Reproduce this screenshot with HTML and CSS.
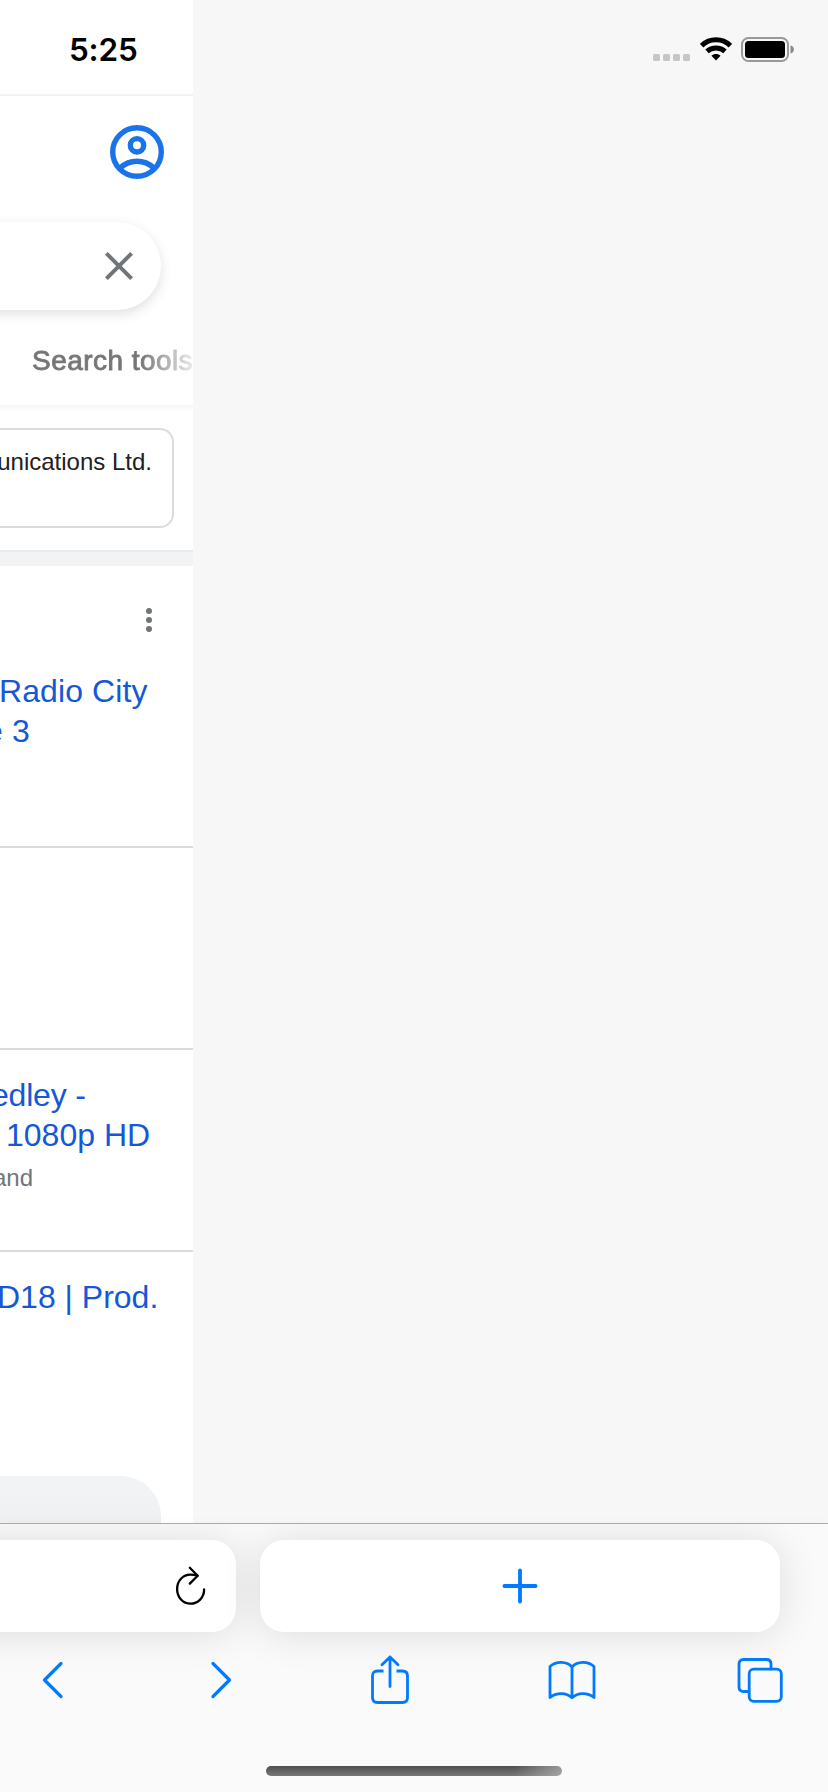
FILE: index.html
```html
<!DOCTYPE html>
<html lang="en">
<head>
<meta charset="utf-8">
<title>Browser</title>
<link rel="stylesheet" href="styles.css">
</head>
<body>
<div class="screen">
  <div class="viewport">
    <main class="page">
      <div class="status-left"><span class="time">5:25</span></div>
      <header class="header">
        <svg class="avatar" width="54" height="54" viewBox="0 0 54 54" fill="none" stroke="#1a73e8" stroke-width="5.4">
          <circle cx="27" cy="27" r="24.3"/>
          <circle cx="27" cy="20.3" r="6.7"/>
          <path d="M10 43C20 34 34 34 44 43"/>
        </svg>
      </header>
      <div class="search">
        <svg width="28" height="28" viewBox="0 0 28 28" stroke="#70757a" stroke-width="4"><path d="M1.4 1.4L26.6 26.6M26.6 1.4L1.4 26.6"/></svg>
      </div>
      <nav class="tabs"><span class="tab">Search tools</span></nav>
      <div class="card-row"><div class="card"><span>unications Ltd.</span></div></div>
      <div class="band"></div>
      <section class="result first">
        <svg class="dots" width="6" height="24" viewBox="0 0 6 24" fill="#70757a"><circle cx="3" cy="3" r="3"/><circle cx="3" cy="12" r="3"/><circle cx="3" cy="21" r="3"/></svg>
        <h3 class="title r1"><span>Radio City</span><span class="r2">e 3</span></h3>
      </section>
      <section class="result"></section>
      <section class="result">
        <h3 class="title"><span class="e1">edley -</span><span class="e2">1080p HD</span></h3>
        <p class="sub">and</p>
      </section>
      <section class="result last">
        <h3 class="title"><span class="d1">D18 | Prod.</span></h3>
        <div class="more"></div>
      </section>
    </main>
    <div class="status-right">
      <i class="cell"></i><i class="cell"></i><i class="cell"></i><i class="cell"></i>
      <svg class="wifi" width="32" height="24" viewBox="0 0 32 24" fill="none" stroke="#000" stroke-width="5">
        <path d="M1.600 8.600C9.600.8 22.400.8 30.400 8.600"/>
        <path d="M7 14.300C12 9.800 20 9.800 25 14.300"/>
        <path d="M11.400 18.800C14 16.500 18 16.500 20.600 18.800L16 23.600Z" fill="#000" stroke="none"/>
      </svg>
      <svg class="battery" width="53" height="26" viewBox="0 0 53 26">
        <rect x="1" y="1" width="46" height="23" rx="6.500" fill="none" stroke="#999" stroke-width="2"/>
        <rect x="4" y="4" width="40" height="17" rx="3.500"/>
        <path d="M49.500 8.500C54 9.500 54 15.500 49.500 16.500Z" fill="#888"/>
      </svg>
    </div>
  </div>
  <footer class="bar">
    <div class="cards">
      <div class="address">
        <svg width="32" height="40" viewBox="0 0 32 40" fill="none" stroke="#000" stroke-width="2.300" stroke-linecap="round" stroke-linejoin="round">
          <path d="M29.100 23.400C29.100 31.500 23 37.700 15.500 37.700S2.100 31.500 2.100 23.100S8 8.700 15.500 8.700C18.200 8.700 20.200 9.100 22.500 9.700"/>
          <path d="M14.800 1.800L22.700 9.700L14.800 17.600"/>
        </svg>
      </div>
      <div class="newtab">
        <svg width="36" height="36" viewBox="0 0 36 36" stroke="#007aff" stroke-width="3.800" stroke-linecap="round"><path d="M18 2.400V33.600M2.400 18H33.600"/></svg>
      </div>
    </div>
    <div class="tools">
      <svg width="22" height="38" viewBox="0 0 22 38"><path d="M19 2.500L2.500 19L19 35.500"/></svg>
      <svg class="next" width="22" height="38" viewBox="0 0 22 38"><path d="M3 2.500L19.500 19L3 35.500"/></svg>
      <svg width="38" height="50" viewBox="0 0 38 50" class="thin share">
        <path d="M12.500 16H6.500Q1.500 16 1.500 21V42.500Q1.500 47.500 6.500 47.500H31.500Q36.500 47.500 36.500 42.500V21Q36.500 16 31.500 16H25.500" stroke-linecap="butt"/>
        <path d="M19 31.500V2M11 9.800L19 2L27 9.800"/>
      </svg>
      <svg width="48" height="40" viewBox="0 0 48 40" class="thin book">
        <path d="M24 7C18.500 1.200 8.500.9 2 6.500V37.500C8.500 32.200 18.500 32.300 24 37.800C29.500 32.300 39.500 32.200 46 37.500V6.500C39.500.9 29.500 1.200 24 7V37.800"/>
      </svg>
      <svg width="46" height="46" viewBox="0 0 46 46" class="thin">
        <rect x="12.200" y="12.200" width="32.100" height="32.100" rx="4.500"/>
        <path d="M12 34.500H6.500Q2 34.500 2 30V7Q2 2.500 6.500 2.500H29.500Q34 2.500 34 7V12"/>
      </svg>
    </div>
    <div class="home"></div>
  </footer>
</div>
</body>
</html>
```

FILE: styles.css
```css
* { box-sizing: border-box; }
body { margin: 0; font-family: "Liberation Sans", Arial, sans-serif; }
.screen { width: 828px; height: 1792px; display: flex; flex-direction: column; overflow: hidden; background: #f7f7f7; }
.viewport { height: 1523px; display: flex; justify-content: space-between; }
.page { width: 193px; height: 1523px; background: #fff; overflow: hidden; white-space: nowrap; }
.status-left { height: 96px; border-bottom: 2px solid #f2f2f2; padding: 30px 0 0 69px; }
.time { display: block; font: 600 31.5px/40px Inter, sans-serif; letter-spacing: -.2px; color: #000; }
.header { height: 126px; padding: 29px 0 0 110px; }
.avatar { display: block; }
.search { width: 221px; height: 88px; margin-left: -60px; border-radius: 44px; background: #fff; box-shadow: 0 4px 12px rgba(60,64,67,.16); padding: 30px 0 0 165px; }
.search svg { display: block; }
.tabs { height: 97px; padding: 35px 0 0 32px; border-bottom: 2px solid #f7f7f7; }
.tab { display: block; font-size: 28px; line-height: 32px; color: transparent; letter-spacing: .45px; background: linear-gradient(90deg, #757575 0, #757575 108px, #e4e4e4 158px); -webkit-background-clip: text; background-clip: text; -webkit-text-stroke: .9px transparent; }
.card-row { height: 143px; padding-top: 21px; background: linear-gradient(#fafafa, #fff 5px); }
.card { width: 174px; height: 100px; border: 2px solid #dadce0; border-left: 0; border-radius: 0 14px 14px 0; padding: 16px 20px 0 0; display: flex; justify-content: flex-end; font-size: 24px; line-height: 32px; color: #202124; }
.band { height: 16px; background: #f1f3f4; border-top: 2px solid #e8eaed; }
.result { height: 202px; padding-top: 25px; border-bottom: 2px solid #dadada; overflow: hidden; }
.first { height: 282px; padding-top: 42px; }
.dots { display: block; margin-left: 146px; }
.title { margin: 0; font-size: 32px; font-weight: 400; line-height: 40px; color: #1558d6; }
.title span { display: block; }
.r1 { margin-top: 39px; margin-left: -1px; letter-spacing: .1px; }
.r2 { margin-left: -14px; }
.e1 { margin-left: -9px; letter-spacing: -.2px; }
.e2 { margin-left: 6px; }
.d1 { margin-left: -3px; }
.sub { margin: 7px 0 0 -7px; font-size: 24px; line-height: 32px; color: #70757a; }
.last { height: 271px; border: 0; }
.more { width: 161px; height: 80px; margin-top: 159px; border-radius: 0 40px 0 0; background: linear-gradient(#f1f3f4 20px, #eeeff1 47px); }
.status-right { display: flex; align-items: flex-start; padding: 37px 34px 0 0; }
.cell { width: 7px; height: 7px; margin: 17px 3px 0 0; border-radius: 1.5px; background: #c6c6c6; }
.wifi { margin: 0 9px 0 7px; }
.bar { height: 269px; border-top: 1px solid #aaa; background: #fafafa; box-shadow: 0 -2px 12px rgba(0,0,0,.015); display: flex; flex-direction: column; overflow: hidden; }
.cards { display: flex; gap: 24px; padding-top: 16px; }
.address, .newtab { height: 92px; background: #fff; box-shadow: 0 2px 40px rgba(0,0,0,.12); }
.address { width: 336px; margin-left: -100px; border-radius: 24px; padding: 26px 0 0 275px; }
.newtab { width: 520px; border-radius: 24px; display: flex; align-items: center; justify-content: center; }
.tools { height: 96px; display: flex; align-items: center; padding-left: 42px; position: relative; }
.tools svg { fill: none; stroke: #007aff; stroke-width: 3.2; stroke-linecap: round; stroke-linejoin: round; }
.tools .thin { stroke-width: 2.8; }
.tools .next { margin-left: 146px; }
.tools .share { margin: 0 139px 0 139px; }
.tools .book { margin-right: 141px; }
.home { width: 296px; height: 10px; margin: 38px 0 0 266px; border-radius: 5px; background: linear-gradient(90deg, transparent 84%, rgba(190,190,190,.65)), linear-gradient(#505050, #777); }
```
